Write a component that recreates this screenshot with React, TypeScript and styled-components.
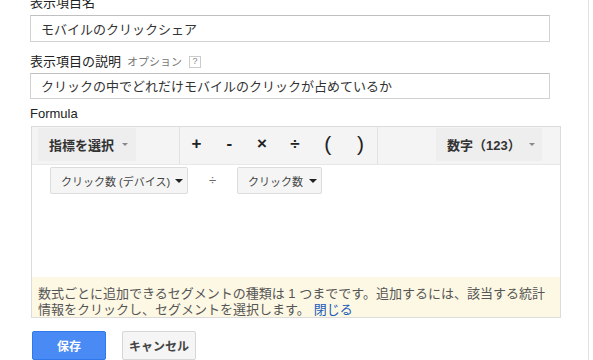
import React from "react";
import styled, { createGlobalStyle } from "styled-components";

const GlobalStyle = createGlobalStyle`
  html, body {
    margin: 0;
    padding: 0;
    background: #fff;
    overflow: hidden;
  }
  body {
    font-family: "Liberation Sans", "Noto Sans CJK JP", sans-serif;
    color: #222;
  }
`;

const Page = styled.div`
  width: 589px;
  height: 360px;
  box-sizing: border-box;
  border-right: 1px solid #e2e2e2;
  padding-left: 30px;
  display: flex;
  flex-direction: column;
  overflow: hidden;
`;

const Label = styled.div<{ $top: number }>`
  margin-top: ${(p) => p.$top}px;
  font-size: 13px;
  line-height: 16px;
  height: 16px;
  color: #222;
  display: flex;
  align-items: center;
  gap: 4px;
  white-space: nowrap;
`;

const Optional = styled.span`
  font-size: 11px;
  color: #777;
  margin-left: 2px;
`;

const Help = styled.span`
  display: inline-flex;
  align-items: center;
  justify-content: center;
  width: 10px;
  height: 10px;
  border: 1px solid #ccc;
  font-size: 9px;
  color: #888;
  margin-left: 3px;
  line-height: 1;
`;

const Input = styled.div<{ $top: number }>`
  margin-top: ${(p) => p.$top}px;
  width: 520px;
  height: 29px;
  box-sizing: border-box;
  border: 1px solid #d2d2d2;
  border-top-color: #c0c0c0;
  padding: 0 10px;
  font-size: 13px;
  color: #333;
  display: flex;
  align-items: center;
  white-space: nowrap;
`;

const FormulaBox = styled.div`
  margin-top: 4px;
  margin-left: 1px;
  width: 530px;
  box-sizing: border-box;
  border: 1px solid #dcdcdc;
  display: flex;
  flex-direction: column;
`;

const Toolbar = styled.div`
  height: 37px;
  background: #f4f4f4;
  border-bottom: 1px solid #e8e8e8;
  display: flex;
  align-items: stretch;
`;

const Segment = styled.div<{ $width?: number }>`
  display: flex;
  align-items: center;
  ${(p) => (p.$width ? `width: ${p.$width}px;` : "flex: 1;")}
  border-right: 1px solid #e2e2e2;
  &:last-child {
    border-right: none;
  }
`;

const ToolButton = styled.div<{ $width: number; $offset: number }>`
  margin-left: ${(p) => p.$offset}px;
  width: ${(p) => p.$width}px;
  height: 33px;
  margin-top: -3px;
  background: #eeeeee;
  display: flex;
  align-items: center;
  padding-left: 11px;
  box-sizing: border-box;
  font-size: 13px;
  font-weight: bold;
  color: #333;
  white-space: nowrap;
`;

const Caret = styled.span<{ $color?: string; $size?: number; $gap?: number }>`
  display: inline-block;
  width: 0;
  height: 0;
  border-left: ${(p) => p.$size ?? 3}px solid transparent;
  border-right: ${(p) => p.$size ?? 3}px solid transparent;
  border-top: ${(p) => p.$size ?? 3}px solid ${(p) => p.$color ?? "#888"};
  margin-left: ${(p) => p.$gap ?? 8}px;
`;

const Operator = styled.div<{ $light?: boolean }>`
  width: 33px;
  text-align: center;
  font-size: ${(p) => (p.$light ? "21px" : "17px")};
  font-weight: ${(p) => (p.$light ? "normal" : "bold")};
  color: #222;
  margin-top: -3px;
`;

const Body = styled.div`
  height: 112px;
  background: #fff;
  padding: 2px 0 0 18px;
  box-sizing: border-box;
  display: flex;
  align-items: flex-start;
`;

const Chip = styled.div<{ $width: number }>`
  width: ${(p) => p.$width}px;
  height: 27px;
  box-sizing: border-box;
  background: #f5f5f5;
  border: 1px solid #dcdcdc;
  border-radius: 2px;
  display: flex;
  align-items: center;
  padding-left: 10px;
  font-size: 11px;
  color: #444;
  white-space: nowrap;
`;

const Divide = styled.div`
  width: 49px;
  text-align: center;
  font-size: 13px;
  color: #666;
  line-height: 27px;
`;

const Notice = styled.div`
  height: 40px;
  box-sizing: border-box;
  background: #fdf8e4;
  padding: 9px 0 0 6px;
  font-size: 13px;
  line-height: 16px;
  color: #555;
  overflow: hidden;
  white-space: nowrap;
`;

const Link = styled.a`
  color: #1a5bb8;
  text-decoration: none;
  margin-left: 4px;
`;

const Actions = styled.div`
  margin-top: 13px;
  margin-left: 2px;
  display: flex;
  gap: 16px;
`;

const Button = styled.div<{ $primary?: boolean }>`
  width: 74px;
  height: 29px;
  box-sizing: border-box;
  border-radius: 2px;
  border: 1px solid ${(p) => (p.$primary ? "#3079ed" : "#d6d6d6")};
  background: ${(p) => (p.$primary ? "#4a8af4" : "#f5f5f5")};
  color: ${(p) => (p.$primary ? "#fff" : "#444")};
  font-size: 12px;
  font-weight: bold;
  display: flex;
  align-items: center;
  justify-content: center;
`;

const operators = ["+", "-", "×", "÷"];

export default function App() {
  return (
    <>
      <GlobalStyle />
      <Page>
        <Label $top={-5}>表示項目名</Label>
        <Input $top={4}>モバイルのクリックシェア</Input>

        <Label $top={12}>
          表示項目の説明
          <Optional>オプション</Optional>
          <Help>?</Help>
        </Label>
        <Input $top={3}>クリックの中でどれだけモバイルのクリックが占めているか</Input>

        <Label $top={7}>Formula</Label>

        <FormulaBox>
          <Toolbar>
            <Segment $width={147}>
              <ToolButton $width={98} $offset={6}>
                指標を選択
                <Caret />
              </ToolButton>
            </Segment>
            <Segment $width={197}>
              {operators.map((op) => (
                <Operator key={op}>{op}</Operator>
              ))}
              <Operator $light>(</Operator>
              <Operator $light>)</Operator>
            </Segment>
            <Segment>
              <ToolButton $width={106} $offset={58}>
                数字（123）
                <Caret />
              </ToolButton>
            </Segment>
          </Toolbar>

          <Body>
            <Chip $width={138}>
              クリック数 (デバイス)
              <Caret $color="#222" $size={4} $gap={5} />
            </Chip>
            <Divide>÷</Divide>
            <Chip $width={85}>
              クリック数
              <Caret $color="#222" $size={4} $gap={6} />
            </Chip>
          </Body>

          <Notice>
            数式ごとに追加できるセグメントの種類は 1 つまでです。追加するには、該当する統計
            <br />
            情報をクリックし、セグメントを選択します。
            <Link href="#">閉じる</Link>
          </Notice>
        </FormulaBox>

        <Actions>
          <Button $primary>保存</Button>
          <Button>キャンセル</Button>
        </Actions>
      </Page>
    </>
  );
}
